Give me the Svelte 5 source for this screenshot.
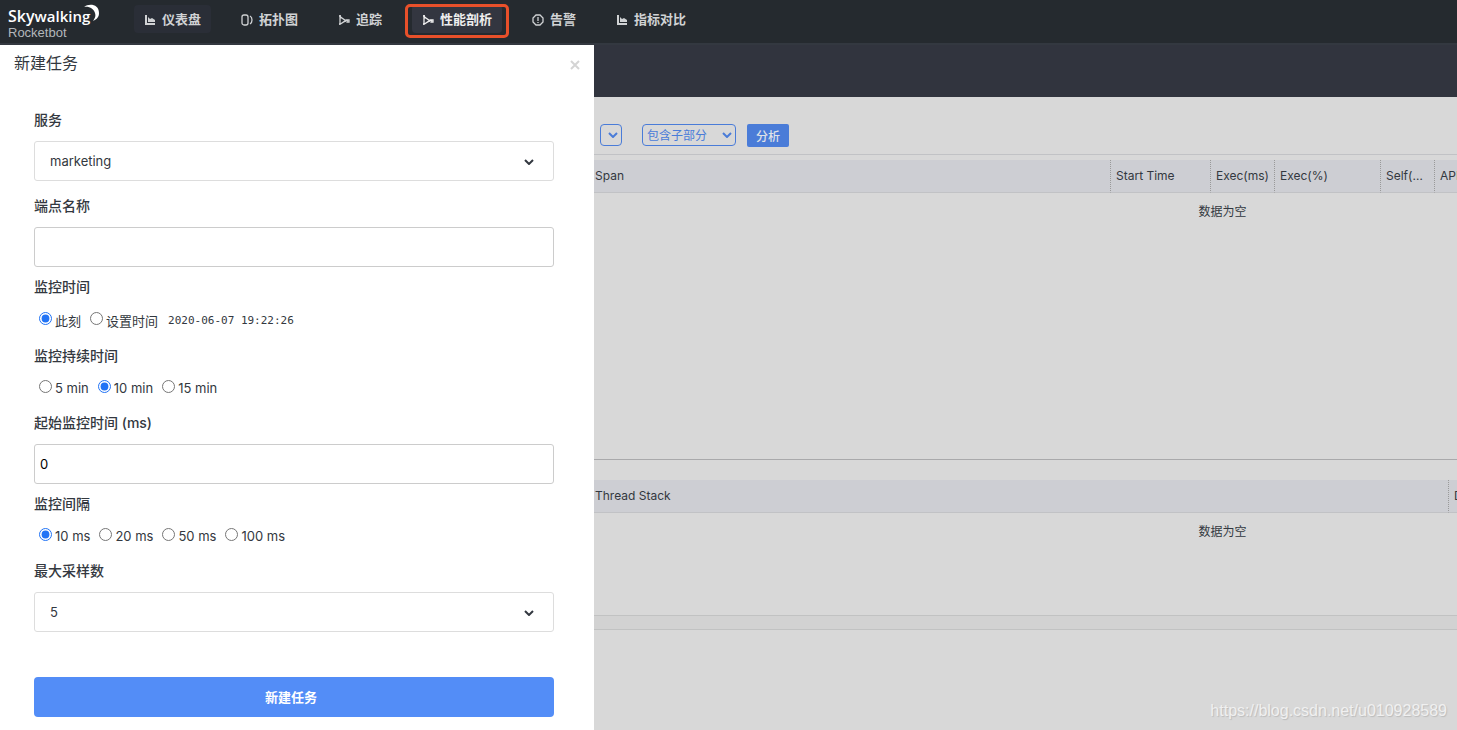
<script lang="ts">
  interface NavItem {
    label: string;
    icon: string;
    filled?: boolean;
    state?: 'soft' | 'active';
  }

  const chartIcon = 'M1 1h2v8h8v2H1z M4 3l2 2 2-1 3 2v2H4z';
  const traceIcon = 'M2 1v10 M1 2h2 M1 10h2 M2 3C4 3 4 6 10 7 M2 10C4 10 5 7 8 7 M9 6h2v2h-2z';

  const navItems: NavItem[] = [
    { label: '仪表盘', icon: chartIcon, filled: true, state: 'soft' },
    { label: '拓扑图', icon: 'M3 1h2a2 2 0 0 1 2 2v6a2 2 0 0 1-2 2H3a2 2 0 0 1-2-2V3a2 2 0 0 1 2-2z M9 2q2 1 2 4t-2 4' },
    { label: '追踪', icon: traceIcon },
    { label: '性能剖析', icon: traceIcon, state: 'active' },
    { label: '告警', icon: 'M4 1h4l3 3v4l-3 3H4L1 8V4z M6 3v4 M6 8v1' },
    { label: '指标对比', icon: chartIcon, filled: true },
  ];

  const spanColumns = [
    { label: 'Span', width: 516 },
    { label: 'Start Time', width: 100 },
    { label: 'Exec(ms)', width: 64 },
    { label: 'Exec(%)', width: 106 },
    { label: 'Self(ms)', width: 54 },
    { label: 'API', width: 417 },
  ];

  const stackColumns = [
    { label: 'Thread Stack', width: 854 },
    { label: 'Duration (ms)', width: 403 },
  ];

  const durations = [5, 10, 15];
  const intervals = [10, 20, 50, 100];

  let service = $state('marketing');
  let endpoint = $state('');
  let monitorTime = $state('now');
  let duration = $state(10);
  let threshold = $state('0');
  let interval = $state(10);
  let maxSamples = $state('5');
  let mode = $state('include');
</script>

{#snippet chevron()}
  <svg class="chevron" viewBox="0 0 10 6" aria-hidden="true">
    <path d="M1 1l4 4 4-4" fill="none" stroke="currentColor" stroke-width="2" />
  </svg>
{/snippet}

{#snippet emptyTable(columns: { label: string; width: number }[])}
  <table class="rk-table">
    <colgroup>
      {#each columns as c}
        <col style="width: {c.width}px" />
      {/each}
    </colgroup>
    <thead>
      <tr>
        {#each columns as c}
          <th scope="col">{c.label}</th>
        {/each}
      </tr>
    </thead>
    <tbody>
      <tr><td colspan={columns.length}>数据为空</td></tr>
    </tbody>
  </table>
{/snippet}

<div class="app">
  <header class="rk-header">
    <a class="logo" href="#home" aria-label="Skywalking Rocketbot">
      <span class="logo-name"><b>Sky</b>walking</span>
      <span class="logo-sub">Rocketbot</span>
      <svg class="logo-moon" viewBox="0 0 16 18" aria-hidden="true">
        <path d="M0 3C5-1 15 0 15 9c0 4-2 6-6 8 2-3 3-5 2-8C10 5 5 2 0 3z" fill="#fff" />
      </svg>
    </a>
    <nav class="rk-nav">
      {#each navItems as item}
        <a
          class="nav-item"
          class:soft={item.state === 'soft'}
          class:active={item.state === 'active'}
          href="#{item.label}"
        >
          <svg class="nav-icon" viewBox="0 0 12 12" aria-hidden="true">
            <path
              d={item.icon}
              fill={item.filled ? 'currentColor' : 'none'}
              stroke={item.filled ? 'none' : 'currentColor'}
              stroke-width="1.3"
            />
          </svg>
          {item.label}
        </a>
      {/each}
    </nav>
  </header>

  <div class="body">
    <aside class="drawer">
      <div class="drawer-head">
        <h1>新建任务</h1>
        <button class="close" type="button" aria-label="关闭">
          <svg viewBox="0 0 10 10" aria-hidden="true">
            <path d="M1 1l8 8M9 1L1 9" stroke="currentColor" stroke-width="2" />
          </svg>
        </button>
      </div>

      <form class="form" onsubmit={(e) => e.preventDefault()}>
        <label class="label" for="service">服务</label>
        <div class="select-box">
          <select id="service" bind:value={service}>
            <option value="marketing">marketing</option>
          </select>
          {@render chevron()}
        </div>

        <label class="label" for="endpoint">端点名称</label>
        <input class="text-input" id="endpoint" type="text" bind:value={endpoint} />

        <fieldset>
          <legend class="label">监控时间</legend>
          <div class="radios with-date">
            <label><input type="radio" name="time" value="now" bind:group={monitorTime} />此刻</label>
            <label><input type="radio" name="time" value="set" bind:group={monitorTime} />设置时间</label>
            <time>2020-06-07 19:22:26</time>
          </div>
        </fieldset>

        <fieldset>
          <legend class="label">监控持续时间</legend>
          <div class="radios">
            {#each durations as d}
              <label><input type="radio" name="duration" value={d} bind:group={duration} />{d} min</label>
            {/each}
          </div>
        </fieldset>

        <label class="label" for="threshold">起始监控时间 (ms)</label>
        <input class="text-input" id="threshold" type="text" bind:value={threshold} />

        <fieldset>
          <legend class="label">监控间隔</legend>
          <div class="radios">
            {#each intervals as i}
              <label><input type="radio" name="interval" value={i} bind:group={interval} />{i} ms</label>
            {/each}
          </div>
        </fieldset>

        <label class="label" for="samples">最大采样数</label>
        <div class="select-box">
          <select id="samples" bind:value={maxSamples}>
            <option value="5">5</option>
          </select>
          {@render chevron()}
        </div>

        <button class="submit" type="submit">新建任务</button>
      </form>
    </aside>

    <main class="main">
      <div class="top-bar"></div>
      <div class="toolbar">
        <div class="mini-select narrow">
          <select aria-label="Span"><option value=""></option></select>
          {@render chevron()}
        </div>
        <div class="mini-select">
          <select aria-label="分析范围" bind:value={mode}>
            <option value="include">包含子部分</option>
          </select>
          {@render chevron()}
        </div>
        <button class="analyze" type="button">分析</button>
      </div>
      <section class="spans">{@render emptyTable(spanColumns)}</section>
      <section class="stacks">{@render emptyTable(stackColumns)}</section>
      <div class="scroll-strip"></div>
    </main>
  </div>
  <span class="watermark">https://blog.csdn.net/u010928589</span>
</div>

<style>
  :global(body) {
    margin: 0;
  }

  .app {
    position: relative;
    display: flex;
    flex-direction: column;
    min-height: 100vh;
    overflow: hidden;
    background: #d8d8d8;
    color: #333840;
    font-family: Inter, 'Noto Sans CJK SC', sans-serif;
    font-size: 13px;
  }

  .app :global(*) {
    box-sizing: border-box;
  }

  button,
  input,
  select {
    font: inherit;
    color: inherit;
  }

  .rk-header {
    display: flex;
    align-items: flex-start;
    height: 45px;
    background: #252a2f;
    border-bottom: 2px solid #333840;
  }

  .logo {
    position: relative;
    display: flex;
    flex-direction: column;
    flex: none;
    width: 134px;
    padding: 6px 0 0 8px;
    color: #fff;
    text-decoration: none;
  }

  .logo-name {
    font: 600 15px/20px 'Open Sans', sans-serif;
  }

  .logo-name b {
    font-size: 16px;
    font-weight: 600;
  }

  .logo-sub {
    font: 13px/14px 'Liberation Sans', sans-serif;
    color: #b3b7bb;
  }

  .logo-moon {
    position: absolute;
    left: 84px;
    top: 4px;
    width: 16px;
    height: 18px;
  }

  .rk-nav {
    display: flex;
    gap: 20px;
    padding-top: 5px;
  }

  .nav-item {
    position: relative;
    display: flex;
    align-items: center;
    gap: 6px;
    height: 28px;
    padding: 0 10px 2px;
    border-radius: 4px;
    color: #d0d2d4;
    font-weight: 700;
    text-decoration: none;
    white-space: nowrap;
  }

  .nav-item.soft {
    background: #2a2e37;
  }

  .nav-item.active {
    background: #333640;
    color: #eee;
  }

  .nav-item.active::after {
    content: '';
    position: absolute;
    inset: -1px -7px -5px;
    border: 3px solid #e8502a;
    border-radius: 5px;
  }

  .nav-icon {
    width: 12px;
    height: 12px;
    margin-top: 3px;
  }

  .body {
    display: flex;
    flex: 1;
  }

  .drawer {
    flex: none;
    width: clamp(420px, 41vw, 594px);
    padding-bottom: 13px;
    background: #fff;
  }

  .drawer-head {
    display: flex;
    align-items: center;
    justify-content: space-between;
    height: 33px;
    padding: 0 14px;
  }

  h1 {
    margin: 0;
    font-size: 16px;
    font-weight: 400;
  }

  .close {
    display: flex;
    padding: 6px 0 0;
    border: 0;
    background: none;
    color: #d4d4d4;
  }

  .close svg {
    width: 10px;
    height: 10px;
  }

  .form {
    display: flex;
    flex-direction: column;
    padding: 32px 40px 0 34px;
  }

  .label {
    display: block;
    margin-bottom: 11px;
    padding: 0;
    font-size: 14px;
    font-weight: 500;
    line-height: 20px;
  }

  .select-box {
    position: relative;
    margin-bottom: 15px;
  }

  .select-box select {
    display: block;
    width: 100%;
    height: 40px;
    padding: 0 15px;
    appearance: none;
    border: 1px solid #ddd;
    border-radius: 3px;
    background: #fff;
  }

  .chevron {
    position: absolute;
    top: 50%;
    right: 20px;
    width: 10px;
    height: 6px;
    margin-top: -2px;
    pointer-events: none;
  }

  .text-input {
    height: 40px;
    margin-bottom: 10px;
    padding: 0 5px;
    border: 1px solid #ccc;
    border-radius: 3px;
    background: #fff;
    color: #000;
  }

  fieldset {
    margin: 0 0 14px;
    padding: 0;
    border: 0;
  }

  .radios {
    display: flex;
    align-items: center;
    gap: 4px;
    height: 22px;
  }

  .radios.with-date {
    height: 24px;
  }

  .radios label {
    display: flex;
    align-items: center;
  }

  .radios input {
    width: 13px;
    height: 13px;
    margin: 0 3px 3px 5px;
    accent-color: #2173f5;
  }

  time {
    padding-left: 6px;
    font: 11px 'DejaVu Sans Mono', monospace;
  }

  .submit {
    height: 40px;
    margin-top: 30px;
    padding: 0 6px 2px 0;
    border: 0;
    border-radius: 4px;
    background: #538df7;
    color: #fff;
    font-weight: 700;
  }

  .main {
    flex: 1;
    min-width: 0;
    overflow: hidden;
  }

  .top-bar {
    height: 52px;
    background: #31343e;
  }

  .toolbar {
    display: flex;
    align-items: center;
    height: 58px;
    padding: 27px 6px 8px;
    border-bottom: 1px solid #c1c2c5;
    font-size: 12px;
  }

  .mini-select {
    position: relative;
    width: 94px;
    margin-right: 11px;
    color: #4a7cd8;
  }

  .mini-select.narrow {
    width: 22px;
    margin-right: 20px;
  }

  .mini-select select {
    display: block;
    width: 100%;
    height: 22px;
    padding: 0 4px;
    appearance: none;
    border: 1px solid #4a7cd8;
    border-radius: 4px;
    background: transparent;
  }

  .mini-select .chevron {
    right: 4px;
    margin-top: -3px;
  }

  .analyze {
    height: 23px;
    padding: 0 9px;
    border: 0;
    border-radius: 2px;
    background: #4a7cd8;
    color: #e0e3e8;
    font-weight: 500;
  }

  .spans {
    height: 305px;
    padding-top: 5px;
    border-bottom: 1px solid #a9a9ab;
  }

  .stacks {
    height: 155px;
    padding-top: 20px;
  }

  /* wider than the pane, the last column runs past its edge */
  .rk-table {
    width: 100%;
    min-width: 1257px;
    table-layout: fixed;
    border-collapse: separate;
    border-spacing: 0;
    font-size: 12px;
  }

  .rk-table th {
    height: 33px;
    padding: 0 5px 2px;
    overflow: hidden;
    border-bottom: 1px solid #c1c2c5;
    border-left: 1px dotted #999;
    background: #cdced3;
    font-weight: 400;
    text-align: left;
    text-overflow: ellipsis;
    white-space: nowrap;
  }

  .rk-table th:first-child {
    padding-left: 1px;
    border-left: 0;
  }

  .rk-table td {
    height: 35px;
    padding: 0;
    text-align: center;
  }

  .scroll-strip {
    height: 15px;
    border: 1px solid #c1c2c2;
    border-width: 1px 0;
    background: #d2d2d2;
  }

  .watermark {
    position: absolute;
    right: 10px;
    bottom: 9px;
    color: #f0f0f0;
    font: 16px/20px 'Liberation Sans', sans-serif;
    text-shadow: 1px 1px 1px #bbb;
  }
</style>
